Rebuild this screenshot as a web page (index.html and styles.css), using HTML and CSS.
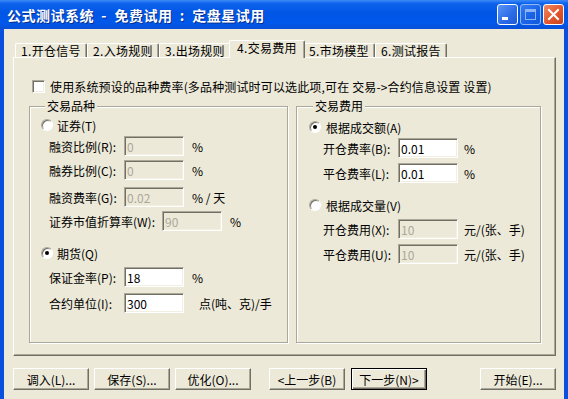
FILE: index.html
```html
<!DOCTYPE html>
<html lang="zh-CN">
<head>
    <meta charset="UTF-8">
    <title>公式测试系统 - 免费试用 : 定盘星试用</title>
    <link rel="stylesheet" href="styles.css">
</head>
<body>
    <div class="window">
        <div class="titlebar">
            <span class="title">公式测试系统  -  免费试用  :  定盘星试用</span>
            <div class="caption-btns">
                <span class="cbtn min"></span>
                <span class="cbtn max"></span>
                <span class="cbtn close">
                    <svg width="13" height="13" viewBox="0 0 13 13">
                        <path d="M2 2L11 11M11 2L2 11" stroke="#fff" stroke-width="2" stroke-linecap="square"/>
                    </svg>
                </span>
            </div>
        </div>

        <div class="client">
            <!-- 页签 -->
            <div class="tabs">
                <span class="tab">1.开仓信号</span>
                <span class="tab">2.入场规则</span>
                <span class="tab">3.出场规则</span>
                <span class="tab active">4.交易费用</span>
                <span class="tab">5.市场模型</span>
                <span class="tab">6.测试报告</span>
            </div>

            <div class="panel">
                <div class="check-row">
                    <span class="checkbox"></span>
                    <span class="check-text">使用系统预设的品种费率(多品种测试时可以选此项,可在 交易-&gt;合约信息设置 设置)</span>
                </div>

                <div class="groups">
                    <fieldset class="group group-left">
                        <legend>交易品种</legend>

                        <div class="option mt4">
                            <span class="radio"></span>
                            <span>证券(T)</span>
                        </div>
                        <div class="field mt4">
                            <label>融资比例(R):</label>
                            <input class="edit" value="0" disabled>
                            <span class="unit">%</span>
                        </div>
                        <div class="field mt4">
                            <label>融券比例(C):</label>
                            <input class="edit" value="0" disabled>
                            <span class="unit">%</span>
                        </div>
                        <div class="field mt7">
                            <label>融资费率(G):</label>
                            <input class="edit" value="0.02" disabled>
                            <span class="unit">% / 天</span>
                        </div>
                        <div class="field mt4">
                            <label class="wide">证券市值折算率(W):</label>
                            <input class="edit" value="90" disabled>
                            <span class="unit">%</span>
                        </div>

                        <div class="option mt15">
                            <span class="radio on"></span>
                            <span>期货(Q)</span>
                        </div>
                        <div class="field mt7">
                            <label>保证金率(P):</label>
                            <input class="edit" value="18">
                            <span class="unit">%</span>
                        </div>
                        <div class="field mt6">
                            <label>合约单位(I):</label>
                            <input class="edit" value="300">
                            <span class="unit far">点(吨、克)/手</span>
                        </div>
                    </fieldset>

                    <fieldset class="group group-right">
                        <legend>交易费用</legend>

                        <div class="option mt6">
                            <span class="radio on"></span>
                            <span>根据成交额(A)</span>
                        </div>
                        <div class="field mt4">
                            <label>开仓费率(B):</label>
                            <input class="edit" value="0.01">
                            <span class="unit">%</span>
                        </div>
                        <div class="field mt5">
                            <label>平仓费率(L):</label>
                            <input class="edit" value="0.01">
                            <span class="unit">%</span>
                        </div>

                        <div class="option mt15">
                            <span class="radio"></span>
                            <span>根据成交量(V)</span>
                        </div>
                        <div class="field mt7">
                            <label>开仓费用(X):</label>
                            <input class="edit" value="10" disabled>
                            <span class="unit">元/(张、手)</span>
                        </div>
                        <div class="field mt5">
                            <label>平仓费用(U):</label>
                            <input class="edit" value="10" disabled>
                            <span class="unit">元/(张、手)</span>
                        </div>
                    </fieldset>
                </div>
            </div>

            <!-- 底部按钮 -->
            <div class="buttons">
                <button class="btn">调入(L)...</button>
                <button class="btn">保存(S)...</button>
                <button class="btn">优化(O)...</button>
                <button class="btn step">&lt;上一步(B)</button>
                <button class="btn default">下一步(N)&gt;</button>
                <button class="btn start">开始(E)...</button>
            </div>
        </div>
    </div>
</body>
</html>
```

FILE: styles.css
```css
:root {
    --face: #ECE9D8;
    --shadow: #ACA899;
    --dark: #716F64;
    --light: #F1EFE2;
}

html, body {
    margin: 0;
    padding: 0;
}

body {
    width: 568px;
    height: 399px;
    overflow: hidden;
    font-family: "Noto Sans CJK SC", sans-serif;
    font-size: 12px;
    color: #000;
}

.window {
    height: 399px;
    display: flex;
    flex-direction: column;
    background: #0A50DE;
}

/* 标题栏 */
.titlebar {
    height: 29px;
    display: flex;
    align-items: center;
    justify-content: space-between;
    padding: 0 4px 0 7px;
    background: linear-gradient(to bottom, #3D8BF8 0%, #0E63EC 12%, #0055E5 45%, #0058EA 80%, #0A4FD6 100%);
}

.title {
    color: #fff;
    font-weight: bold;
    font-size: 14px;
    letter-spacing: 0.5px;
    white-space: pre;
    text-shadow: 1px 1px 0 #0A2E8A;
}

.caption-btns {
    display: flex;
    gap: 2px;
}

.cbtn {
    position: relative;
    width: 19px;
    height: 19px;
    border: 1px solid #fff;
    border-radius: 3px;
    background: linear-gradient(135deg, #5C95F6 0%, #2D6DE8 55%, #1F59D6 100%);
    display: flex;
    align-items: center;
    justify-content: center;
}

.cbtn.min::after {
    content: "";
    position: absolute;
    left: 4px;
    bottom: 4px;
    width: 6px;
    height: 3px;
    background: #fff;
}

.cbtn.max {
    opacity: 0.55;
}

.cbtn.max::after {
    content: "";
    width: 9px;
    height: 7px;
    border: 1px solid #fff;
    border-top-width: 3px;
}

.cbtn.close {
    background: linear-gradient(135deg, #F08A63 0%, #E2572D 55%, #C9421C 100%);
}

/* 客户区 */
.client {
    flex: 1;
    margin: 0 4px;
    padding: 11px 8px 0 9px;
    background: var(--face);
}

.tabs {
    display: flex;
    align-items: flex-end;
    height: 17px;
    padding-left: 2px;
}

.tab {
    box-sizing: border-box;
    width: 72px;
    height: 14px;
    border-top: 1px solid #fff;
    border-left: 1px solid #fff;
    border-right: 1px solid var(--dark);
    border-radius: 2px 2px 0 0;
    box-shadow: inset -1px 0 0 var(--shadow);
    background: var(--face);
    display: flex;
    align-items: center;
    justify-content: center;
    line-height: 12px;
    letter-spacing: 0.3px;
    white-space: nowrap;
}

.tab.active {
    position: relative;
    z-index: 1;
    width: 76px;
    height: 18px;
    margin: 0 -2px -1px;
    padding-bottom: 3px;
}

.panel {
    box-sizing: border-box;
    height: 299px;
    border: 1px solid;
    border-color: #fff var(--dark) var(--dark) #fff;
    box-shadow: inset -1px -1px 0 var(--shadow);
    padding: 21px 14px 0 15px;
}

.check-row {
    display: flex;
    align-items: center;
    height: 14px;
    white-space: nowrap;
}

.check-text {
    letter-spacing: 0.15px;
}

.checkbox {
    box-sizing: border-box;
    width: 13px;
    height: 13px;
    margin: 0 5px 0 3px;
    background: #fff;
    border: 1px solid;
    border-color: var(--shadow) #fff #fff var(--shadow);
    box-shadow: inset 1px 1px 0 var(--dark), inset -1px -1px 0 var(--light);
}

.groups {
    display: flex;
    gap: 8px;
    margin-top: 5px;
}

.group {
    box-sizing: border-box;
    height: 245px;
    margin: 0;
    min-width: 0;
    border: 1px solid var(--shadow);
    box-shadow: inset 1px 1px 0 #fff, 1px 1px 0 #fff;
}

.group legend {
    margin-left: 4px;
    padding: 0 2px;
    line-height: 16px;
    background: var(--face);
}

.group-left {
    width: 259px;
    padding: 0 0 0 11px;
}

.group-right {
    width: 245px;
    padding: 0 0 0 12px;
}

.option {
    display: flex;
    align-items: center;
    gap: 4px;
    height: 14px;
}

.group-right .option {
    gap: 5px;
}

.radio {
    position: relative;
    box-sizing: border-box;
    width: 12px;
    height: 12px;
    border-radius: 50%;
    background: #fff;
    border: 1px solid;
    border-color: var(--shadow) #fff #fff var(--shadow);
    box-shadow: inset 1px 1px 0 var(--dark);
}

.radio.on::after {
    content: "";
    position: absolute;
    left: 3px;
    top: 3px;
    width: 4px;
    height: 4px;
    border-radius: 50%;
    background: #000;
}

.field {
    display: flex;
    align-items: center;
    height: 20px;
    padding-left: 8px;
    white-space: nowrap;
}

.group-right .field {
    padding-left: 14px;
}

.field label {
    width: 75px;
}

.field label.wide {
    width: 113px;
}

.edit {
    box-sizing: border-box;
    width: 60px;
    height: 20px;
    margin: 0;
    padding: 0 2px;
    font-family: "Noto Sans CJK SC", sans-serif;
    font-size: 12px;
    color: #000;
    background: #fff;
    border: 1px solid;
    border-color: var(--shadow) #fff #fff var(--shadow);
    box-shadow: inset 1px 1px 0 var(--dark), inset -1px -1px 0 var(--light);
    outline: none;
}

.edit:disabled {
    color: var(--shadow);
    background: var(--face);
}

.unit {
    margin-left: 8px;
}

.unit.far {
    margin-left: 15px;
}

.group-right .unit {
    margin-left: 6px;
}

.mt4 { margin-top: 4px; }
.mt5 { margin-top: 5px; }
.mt6 { margin-top: 6px; }
.mt7 { margin-top: 7px; }
.mt15 { margin-top: 15px; }

/* 按钮 */
.buttons {
    display: flex;
    gap: 5px;
    margin-top: 12px;
}

.btn {
    box-sizing: border-box;
    width: 76px;
    height: 22px;
    padding: 0;
    font-family: "Noto Sans CJK SC", sans-serif;
    font-size: 12px;
    color: #000;
    background: var(--face);
    border: 1px solid;
    border-color: #fff var(--dark) var(--dark) #fff;
    box-shadow: inset -1px -1px 0 var(--shadow);
}

.btn.step {
    margin-left: 13px;
}

.btn.default {
    margin-left: 1px;
    border-color: #000;
    box-shadow: inset 1px 1px 0 #fff, inset -1px -1px 0 var(--dark), inset -2px -2px 0 var(--shadow);
}

.btn.start {
    margin-left: auto;
}
```
